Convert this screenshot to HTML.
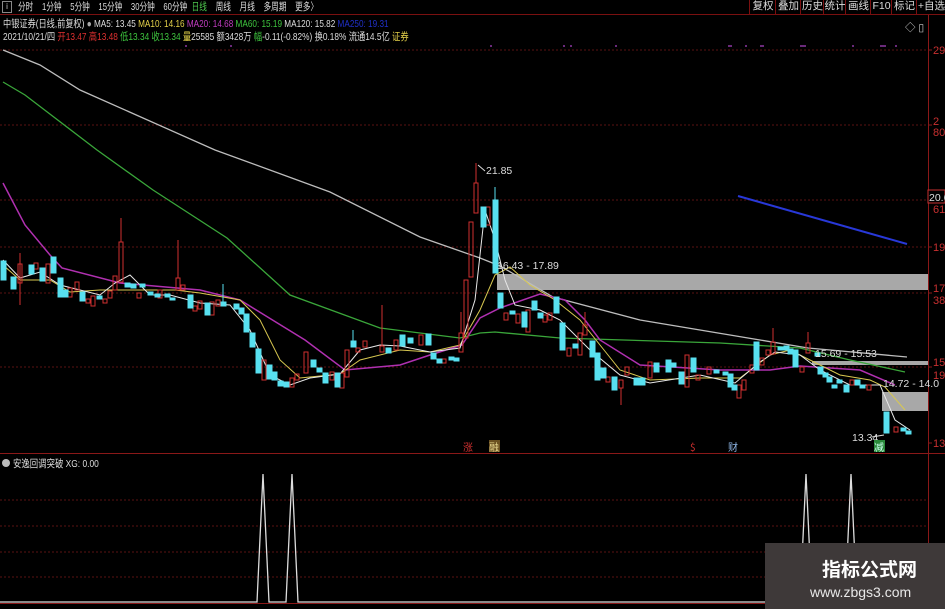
<!DOCTYPE html>
<html><head><meta charset="utf-8"><style>
body{margin:0;width:945px;height:609px;background:#000;overflow:hidden;font-family:"Liberation Sans","Noto Sans CJK SC",sans-serif;position:relative}
.t{position:absolute;white-space:nowrap;font-size:10.5px;line-height:12px;transform-origin:0 0}
.bar{position:absolute;left:0;top:0;width:945px;height:14px;border-bottom:1px solid #7a1010;background:#000}
.btn{position:absolute;top:0;height:14px;border-left:1px solid #7a1010;color:#ddd;font-size:10.5px;line-height:13px;text-align:center}
</style></head><body>
<div class="bar"></div>
<div class="t" style="left:2px;top:1px;color:#ccc;border:1px solid #888;width:8px;height:10px;font-size:8px;line-height:10px;text-align:center">i</div>
<div class="t" style="left:18px;top:1px;color:#ddd;word-spacing:3px;transform:scaleX(0.73)">分时 &nbsp;1分钟 &nbsp;5分钟 &nbsp;15分钟 &nbsp;30分钟 &nbsp;60分钟 <span style="color:#4ec94e">日线</span> &nbsp;周线 &nbsp;月线 &nbsp;多周期 &nbsp;更多〉</div>
<div class="btn" style="left:749px;width:26px">复权</div>
<div class="btn" style="left:775px;width:25px">叠加</div>
<div class="btn" style="left:800px;width:23px">历史</div>
<div class="btn" style="left:823px;width:22px">统计</div>
<div class="btn" style="left:845px;width:25px">画线</div>
<div class="btn" style="left:870px;width:21px">F10</div>
<div class="btn" style="left:891px;width:25px">标记</div>
<div class="btn" style="left:916px;width:29px">+自选</div>
<div class="t" style="left:3px;top:18px;color:#ddd;transform:scaleX(0.78)">中银证券(日线,前复权) <span style="color:#aaa">●</span> MA5: 13.45 <span style="color:#e6d24a">MA10: 14.16</span> <span style="color:#c03cc0">MA20: 14.68</span> <span style="color:#3ec43e">MA60: 15.19</span> MA120: 15.82 <span style="color:#2030c8">MA250: 19.31</span></div>
<div class="t" style="left:3px;top:31px;color:#ddd;transform:scaleX(0.79)">2021/10/21/四 <span style="color:#e03030">开13.47 高13.48</span> <span style="color:#3ec43e">低13.34 收13.34</span> <span style="color:#e6d24a">量</span>25585 额3428万 <span style="color:#3ec43e">幅</span>-0.11(-0.82%) 换0.18% 流通14.5亿 <span style="color:#e6d24a">证券</span></div>
<div class="t" style="left:905px;top:22px;color:#ccc">◇ ▯</div>

<svg style="position:absolute;left:0;top:0" width="945" height="609">
<g stroke="#5a1212" stroke-dasharray="2,2" stroke-width="1">
<line x1="0" y1="50" x2="928" y2="50"/><line x1="0" y1="125" x2="928" y2="125"/><line x1="0" y1="200" x2="928" y2="200"/><line x1="0" y1="247" x2="928" y2="247"/><line x1="0" y1="293" x2="928" y2="293"/><line x1="0" y1="367" x2="928" y2="367"/>
<line x1="0" y1="500" x2="928" y2="500"/><line x1="0" y1="526" x2="928" y2="526"/><line x1="0" y1="552" x2="928" y2="552"/><line x1="0" y1="577" x2="928" y2="577"/>
</g>
<line x1="0" y1="453.5" x2="945" y2="453.5" stroke="#8a1818"/>
<line x1="0" y1="603.5" x2="945" y2="603.5" stroke="#8a1818"/>
<line x1="928.5" y1="15" x2="928.5" y2="609" stroke="#8a1818"/>
<g stroke="#8a1818"><line x1="928" y1="50" x2="932" y2="50"/><line x1="928" y1="125" x2="932" y2="125"/><line x1="928" y1="247" x2="932" y2="247"/><line x1="928" y1="293" x2="932" y2="293"/><line x1="928" y1="367" x2="932" y2="367"/><line x1="928" y1="443" x2="932" y2="443"/></g>
<g fill="#c83030" font-size="11" font-family="Liberation Sans">
<text x="933" y="54">29</text><text x="933" y="125">2</text><text x="933" y="136">80</text><text x="933" y="213">61</text><text x="933" y="251">19</text><text x="933" y="292">17</text><text x="933" y="304">38</text><text x="933" y="366">15</text><text x="933" y="379">19</text><text x="933" y="447">13</text>
</g>
<rect x="928" y="190" width="17" height="13" fill="#000" stroke="#c83030"/><text x="929" y="201" fill="#ddd" font-size="10.5" font-family="Liberation Sans">20.6</text>
<g fill="#6a2a7a"><rect x="185" y="45" width="2" height="2"/><rect x="230" y="45" width="2" height="2"/><rect x="490" y="45" width="2" height="2"/><rect x="563" y="45" width="2" height="2"/><rect x="570" y="45" width="2" height="2"/><rect x="615" y="45" width="2" height="2"/><rect x="728" y="45" width="4" height="2"/><rect x="745" y="45" width="2" height="2"/><rect x="760" y="45" width="4" height="2"/><rect x="800" y="45" width="6" height="2"/><rect x="852" y="45" width="2" height="2"/><rect x="880" y="45" width="6" height="2"/><rect x="895" y="45" width="2" height="2"/></g>

<rect x="497" y="274" width="431" height="16" fill="#a8a8a8"/>
<rect x="812" y="361" width="116" height="4" fill="#a8a8a8"/>
<rect x="882" y="392" width="46" height="19" fill="#a8a8a8"/>

<polyline fill="none" stroke="#bdbdbd" stroke-width="1.3" points="3,50 40,65 80,90 215,150 330,192 420,237 480,258 500,266 553,297 640,320 760,340 808,348 907,357"/>
<polyline fill="none" stroke="#3aa63a" stroke-width="1.3" points="3,82 25,95 97,150 153,190 227,238 290,295 380,328 460,338 480,333 495,332 560,338 720,343 800,348 850,360 905,372"/>
<polyline fill="none" stroke="#b030b0" stroke-width="1.5" points="3,183 25,225 50,255 62,268 120,283 200,290 240,300 305,340 345,370 400,365 430,355 462,345 480,318 500,308 540,294 565,300 585,320 600,340 640,365 720,370 770,370 800,366 860,370 895,385"/>
<polyline fill="none" stroke="#d8c850" stroke-width="1" points="3,265 20,280 50,280 70,292 100,290 120,290 150,290 175,290 200,293 240,300 260,320 280,360 300,378 340,374 360,360 400,350 430,352 460,345 480,310 495,275 510,267 530,285 555,300 580,320 600,345 620,370 650,380 700,378 740,378 770,355 790,350 810,360 840,375 870,380 885,387 905,410"/>
<polyline fill="none" stroke="#e8e8e8" stroke-width="1" points="3,260 20,278 40,272 60,285 100,295 115,283 130,275 150,295 170,295 200,303 230,305 250,330 270,375 290,385 310,378 340,374 360,350 380,345 400,346 430,352 460,348 475,300 485,210 495,240 505,280 515,305 540,310 560,320 590,350 620,375 650,383 700,375 735,383 760,362 775,352 800,355 820,370 850,385 880,385 895,420 910,430"/>
<line x1="738" y1="196" x2="907" y2="244" stroke="#2838d8" stroke-width="2"/>

<g>
<g stroke="#d03030" fill="none" stroke-width="1">
<rect x="18" y="264" width="4" height="19"/><line x1="20" y1="253" x2="20" y2="305"/>
<rect x="34" y="263" width="4" height="6"/><rect x="46" y="264" width="4" height="19"/>
<rect x="68" y="288" width="4" height="9"/><rect x="75" y="282" width="4" height="8"/><rect x="86" y="299" width="4" height="4"/><rect x="91" y="296" width="4" height="10"/><rect x="103" y="299" width="4" height="4"/><rect x="108" y="291" width="4" height="7"/><rect x="113" y="276" width="4" height="14"/>
<rect x="119" y="242" width="4" height="40"/><line x1="121" y1="218" x2="121" y2="242"/>
<rect x="137" y="293" width="4" height="5"/><rect x="158" y="290" width="4" height="8"/><rect x="176" y="278" width="4" height="12"/><line x1="178" y1="240" x2="178" y2="278"/><rect x="181" y="285" width="4" height="5"/>
<rect x="193" y="306" width="4" height="5"/><rect x="198" y="301" width="4" height="8"/><rect x="210" y="302" width="4" height="13"/><rect x="216" y="300" width="4" height="6"/>
<rect x="262" y="360" width="4" height="20"/><rect x="290" y="378" width="4" height="9"/><rect x="295" y="374" width="4" height="6"/><rect x="304" y="352" width="4" height="21"/>
<rect x="330" y="372" width="4" height="8"/><rect x="340" y="373" width="4" height="15"/><rect x="345" y="350" width="4" height="27"/>
<rect x="356" y="348" width="4" height="4"/><rect x="363" y="341" width="4" height="6"/><rect x="380" y="346" width="4" height="6"/><line x1="382" y1="305" x2="382" y2="346"/><rect x="394" y="340" width="4" height="10"/><rect x="419" y="335" width="4" height="10"/><rect x="442" y="359" width="4" height="4"/>
<rect x="459" y="333" width="4" height="19"/><line x1="461" y1="312" x2="461" y2="333"/>
<rect x="464" y="280" width="4" height="58"/><rect x="469" y="222" width="4" height="55"/><rect x="474" y="183" width="4" height="30"/><line x1="476" y1="163" x2="476" y2="183"/>
<rect x="486" y="207" width="4" height="18"/><rect x="504" y="313" width="4" height="7"/><rect x="516" y="314" width="4" height="9"/><rect x="526" y="310" width="4" height="22"/><rect x="543" y="315" width="4" height="7"/><rect x="548" y="313" width="4" height="7"/>
<rect x="567" y="348" width="4" height="8"/><rect x="578" y="333" width="4" height="22"/><rect x="583" y="325" width="4" height="10"/><line x1="585" y1="312" x2="585" y2="325"/>
<rect x="606" y="377" width="4" height="5"/><rect x="619" y="380" width="4" height="8"/><line x1="621" y1="388" x2="621" y2="405"/><rect x="625" y="367" width="4" height="8"/><rect x="648" y="362" width="4" height="16"/>
<rect x="685" y="355" width="4" height="32"/><rect x="696" y="375" width="4" height="5"/><rect x="707" y="367" width="4" height="7"/>
<rect x="737" y="385" width="4" height="13"/><rect x="742" y="380" width="4" height="10"/><rect x="750" y="365" width="4" height="8"/>
<rect x="760" y="358" width="4" height="7"/><rect x="766" y="350" width="4" height="5"/><rect x="771" y="342" width="4" height="12"/><line x1="773" y1="328" x2="773" y2="342"/><rect x="800" y="367" width="4" height="5"/><rect x="806" y="343" width="4" height="10"/><line x1="808" y1="332" x2="808" y2="343"/>
<rect x="850" y="380" width="4" height="5"/><rect x="867" y="385" width="4" height="5"/><rect x="894" y="427" width="4" height="5"/>
</g>
<g fill="#58e0f0" stroke="#58e0f0" stroke-width="1">
<rect x="1" y="261" width="5" height="19"/><rect x="11" y="277" width="5" height="12"/><rect x="29" y="265" width="5" height="9"/><rect x="40" y="268" width="5" height="13"/><rect x="51" y="257" width="5" height="16"/>
<rect x="58" y="278" width="5" height="19"/><rect x="63" y="290" width="5" height="7"/><rect x="80" y="292" width="5" height="9"/><rect x="97" y="296" width="5" height="3"/><rect x="125" y="283" width="5" height="4"/><rect x="131" y="284" width="5" height="4"/><rect x="140" y="284" width="5" height="3"/><rect x="148" y="292" width="5" height="3"/><rect x="155" y="294" width="5" height="3"/><rect x="165" y="294" width="5" height="3"/><rect x="170" y="298" width="5" height="2"/>
<rect x="188" y="295" width="5" height="13"/><rect x="205" y="303" width="5" height="12"/><rect x="221" y="302" width="5" height="4"/><line x1="223" y1="284" x2="223" y2="302"/><rect x="234" y="304" width="5" height="5"/><rect x="239" y="308" width="5" height="6"/>
<rect x="244" y="314" width="5" height="18"/><rect x="250" y="333" width="5" height="14"/><rect x="256" y="349" width="5" height="24"/><rect x="267" y="365" width="5" height="14"/><rect x="272" y="372" width="5" height="8"/><rect x="278" y="381" width="5" height="5"/><rect x="284" y="382" width="5" height="5"/>
<rect x="311" y="360" width="5" height="7"/><rect x="317" y="368" width="5" height="4"/><rect x="323" y="373" width="5" height="10"/><rect x="335" y="373" width="5" height="14"/>
<rect x="351" y="341" width="5" height="6"/><line x1="353" y1="330" x2="353" y2="341"/><rect x="386" y="348" width="5" height="5"/><rect x="400" y="335" width="5" height="11"/><rect x="408" y="338" width="5" height="5"/><rect x="426" y="334" width="5" height="11"/><rect x="431" y="353" width="5" height="6"/><rect x="437" y="359" width="5" height="4"/><rect x="449" y="357" width="5" height="3"/><rect x="454" y="358" width="5" height="3"/>
<rect x="481" y="207" width="5" height="20"/><rect x="493" y="200" width="5" height="73"/><line x1="495" y1="187" x2="495" y2="200"/>
<rect x="498" y="293" width="5" height="15"/><rect x="510" y="311" width="5" height="3"/><rect x="522" y="312" width="5" height="15"/><rect x="532" y="301" width="5" height="9"/><rect x="538" y="313" width="5" height="5"/><rect x="554" y="297" width="5" height="16"/><rect x="560" y="323" width="5" height="27"/><rect x="573" y="344" width="5" height="4"/>
<rect x="590" y="341" width="5" height="16"/><rect x="595" y="353" width="5" height="27"/><rect x="601" y="368" width="5" height="10"/><rect x="612" y="377" width="5" height="13"/><rect x="634" y="378" width="5" height="7"/><rect x="640" y="378" width="5" height="7"/><rect x="654" y="363" width="5" height="9"/><rect x="666" y="360" width="5" height="12"/><rect x="671" y="363" width="5" height="4"/><rect x="679" y="372" width="5" height="12"/><rect x="691" y="358" width="5" height="14"/>
<rect x="714" y="370" width="5" height="3"/><rect x="723" y="372" width="5" height="3"/><rect x="728" y="374" width="5" height="13"/><rect x="732" y="385" width="5" height="5"/>
<rect x="754" y="342" width="5" height="28"/><rect x="778" y="347" width="5" height="3"/><rect x="784" y="346" width="5" height="4"/><rect x="788" y="349" width="5" height="5"/><rect x="793" y="350" width="5" height="17"/>
<rect x="815" y="353" width="5" height="3"/><rect x="818" y="367" width="5" height="7"/><rect x="823" y="373" width="5" height="4"/><rect x="827" y="377" width="5" height="5"/><rect x="832" y="385" width="5" height="3"/><rect x="837" y="380" width="5" height="3"/><rect x="844" y="385" width="5" height="7"/><rect x="855" y="380" width="5" height="5"/><rect x="860" y="385" width="5" height="3"/>
<rect x="884" y="412" width="5" height="21"/><rect x="901" y="428" width="5" height="3"/><rect x="906" y="431" width="5" height="3"/>
</g>
</g>

<g fill="#ddd" font-size="10.5" font-family="Liberation Sans">
<text x="486" y="174">21.85</text><text x="497" y="269">16.43 - 17.89</text><text x="815" y="357">15.69 - 15.53</text><text x="883" y="387">14.72 - 14.0</text><text x="852" y="441">13.34</text>
</g>
<polyline points="478,165 485,171" stroke="#ddd" fill="none"/>
<line x1="872" y1="437" x2="884" y2="435" stroke="#ddd"/>
<g font-size="10" font-family="Noto Sans CJK SC">
<text x="463" y="451" fill="#d03030">涨</text><rect x="489" y="440" width="11" height="12" fill="#6a5020"/><text x="489" y="451" fill="#e8d890">融</text>
<text x="690" y="451" fill="#d03030">$</text><text x="728" y="451" fill="#90b8e8">财</text>
<rect x="874" y="440" width="11" height="12" fill="#2a8a3a"/><text x="874" y="451" fill="#cfe">减</text>
</g>

<circle cx="6" cy="463" r="4" fill="#bbb"/>
<text x="13" y="467" fill="#ddd" font-size="10.5" font-family="Liberation Sans,Noto Sans CJK SC" transform="translate(13,0) scale(0.8,1) translate(-13,0)">安逸回调突破 XG: 0.00</text>
<polyline fill="none" stroke="#ddd" stroke-width="1.3" points="0,602 257,602 263,474 269,602 286,602 292,474 298,602 800,602 806,474 812,602 845,602 851,474 857,602 928,602"/>

<rect x="765" y="543" width="180" height="66" fill="#3e3939"/>
<text x="822" y="576" fill="#fff" font-size="19" font-weight="bold" font-family="Noto Sans CJK SC,sans-serif">指标公式网</text>
<text x="810" y="597" fill="#e8e8e8" font-size="14" font-family="Liberation Sans">www.zbgs3.com</text>
</svg>
</body></html>
